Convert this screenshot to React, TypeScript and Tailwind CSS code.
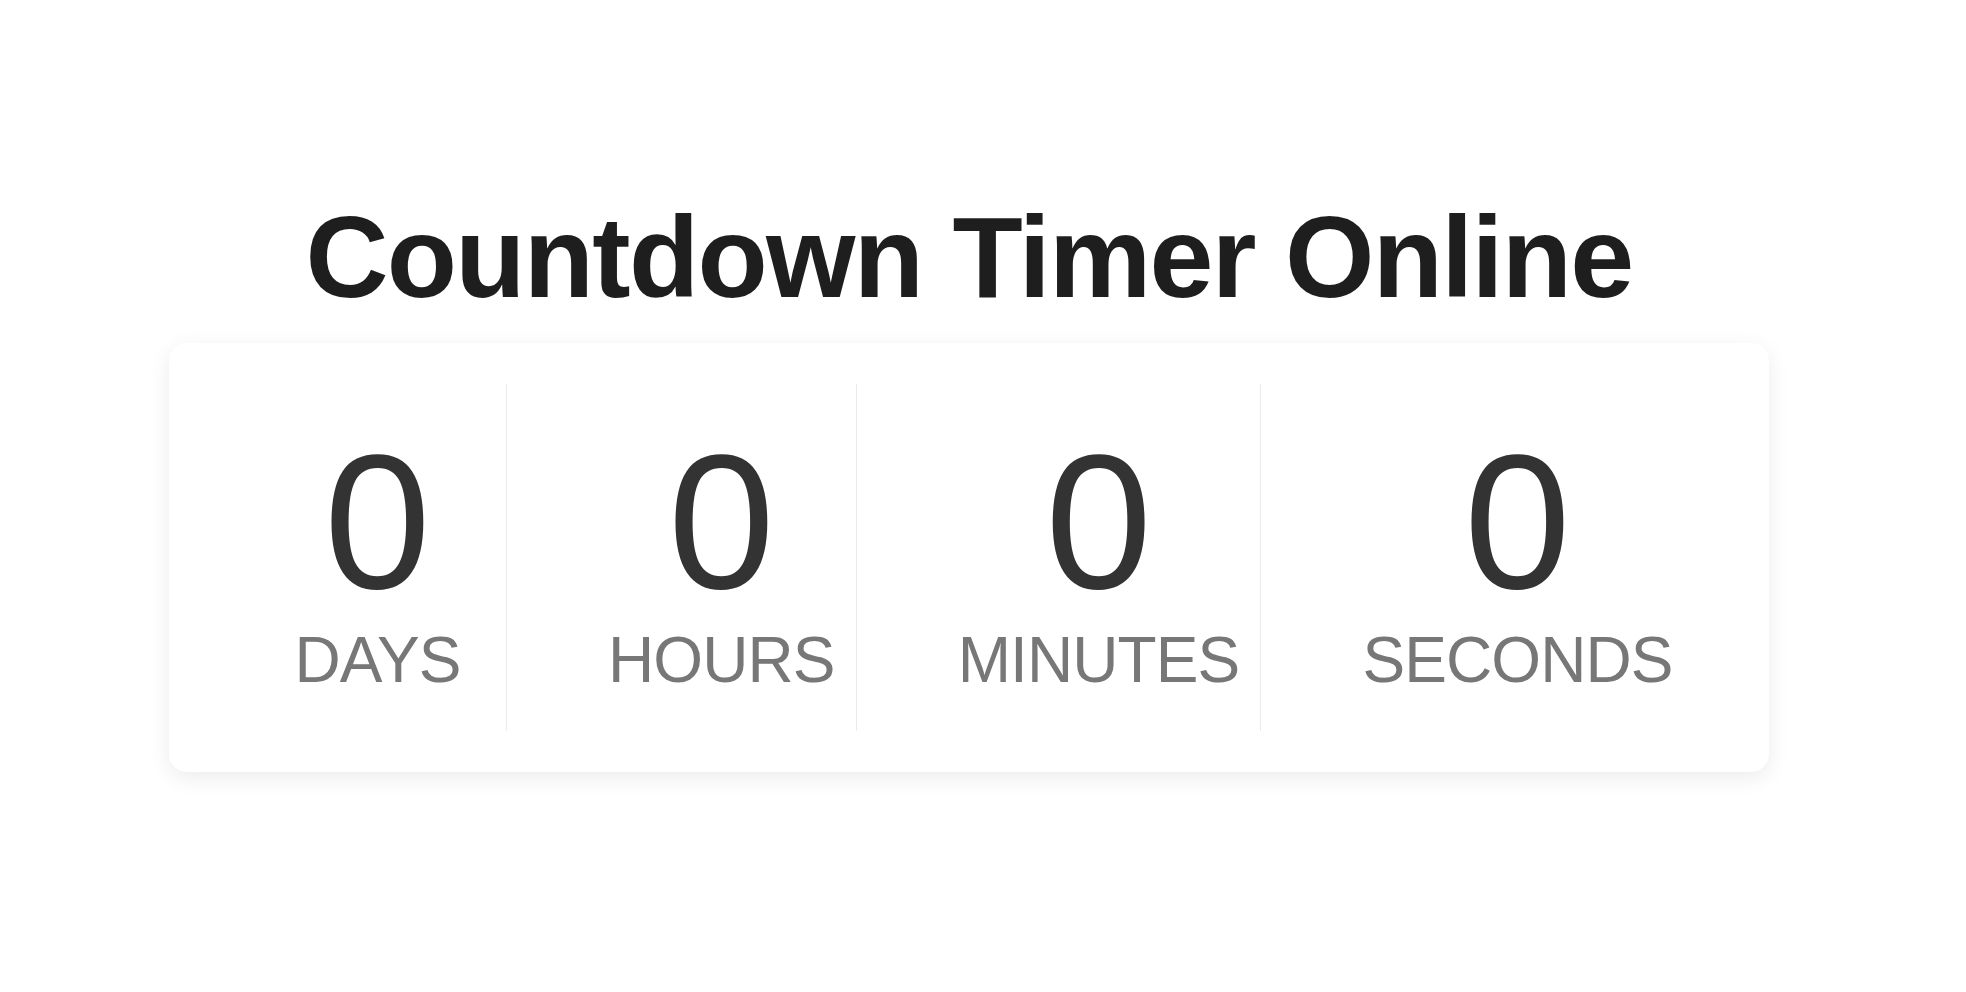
import clsx from "clsx";

const units = [
  { label: "Days", value: 0 },
  { label: "Hours", value: 0 },
  { label: "Minutes", value: 0 },
  { label: "Seconds", value: 0 },
];

export default function App() {
  return (
    <div className="min-h-screen w-full bg-white font-['Liberation_Sans',Arial,sans-serif]">
      <div className="flex w-[1938px] flex-col items-center pt-[200px]">
        <h1 className="text-[115px] font-bold leading-none tracking-[-0.015em] text-[#1e1e1e]">
          Countdown Timer Online
        </h1>

        <div className="mt-[28px] flex w-[1600px] rounded-[18px] bg-white py-[41px] shadow-[0_6px_22px_rgba(0,0,0,0.08)]">
          {units.map((unit, i) => (
            <div
              key={unit.label}
              className={clsx(
                "flex flex-col items-center pb-[39px] pl-[101px] pr-[21px] pt-[42px]",
                i < units.length - 1 && "border-r border-[#ebebeb]"
              )}
            >
              <div className="min-w-[215px] text-center text-[192px] leading-none text-[#333333]">
                {unit.value}
              </div>
              <div className="mt-[10px] text-[64px] uppercase leading-none tracking-[-0.014em] text-[#777777]">
                {unit.label}
              </div>
            </div>
          ))}
        </div>
      </div>
    </div>
  );
}
